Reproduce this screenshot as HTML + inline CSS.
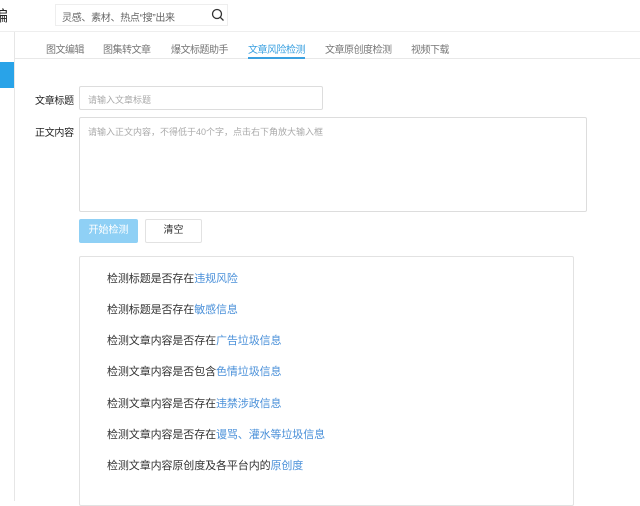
<!DOCTYPE html>
<html><head><meta charset="utf-8"><style>
*{margin:0;padding:0;box-sizing:border-box}
body{width:640px;height:501px;overflow:hidden;background:#fff;font-family:"Liberation Sans","Noto Sans CJK SC",sans-serif;position:relative;color:#333}
.a{position:absolute;white-space:nowrap}
.tab{position:absolute;top:41px;font-size:10px;letter-spacing:-0.5px;color:#777;white-space:nowrap}
.r{position:absolute;left:107px;font-size:11px;letter-spacing:-0.1px;color:#333;white-space:nowrap}
.r span{color:#4a90d9}
</style></head><body>
<div class="a" style="left:-7px;top:5px;font-size:15px;color:#222">编</div>
<div class="a" style="left:55px;top:4px;width:173px;height:22px;border:1px solid #eee;background:#fff"></div>
<div class="a" style="left:62px;top:9px;font-size:10px;letter-spacing:-0.3px;color:#666">灵感、素材、热点“搜”出来</div>
<svg class="a" style="left:211px;top:8px" width="14" height="14" viewBox="0 0 14 14"><circle cx="6" cy="6" r="4.5" fill="none" stroke="#333" stroke-width="1.3"/><line x1="9.3" y1="9.3" x2="12.5" y2="12.5" stroke="#333" stroke-width="1.3"/></svg>
<div class="a" style="left:0;top:31px;width:640px;height:1px;background:#eee"></div>
<div class="a" style="left:14px;top:32px;width:1px;height:469px;background:#e6e6e6"></div>
<div class="a" style="left:0;top:62px;width:14px;height:26px;background:#29a3e8"></div>
<div class="a" style="left:15px;top:58px;width:625px;height:1px;background:#e8e8e8"></div>
<div class="tab" style="left:46px">图文编辑</div>
<div class="tab" style="left:103px">图集转文章</div>
<div class="tab" style="left:171px">爆文标题助手</div>
<div class="tab" style="left:248px;color:#3aa0e0">文章风险检测</div>
<div class="a" style="left:248px;top:57px;width:57px;height:2px;background:#3aa0e0"></div>
<div class="tab" style="left:325px">文章原创度检测</div>
<div class="tab" style="left:411px">视频下载</div>
<div class="a" style="left:35px;top:92px;font-size:10px;letter-spacing:-0.3px;color:#222">文章标题</div>
<div class="a" style="left:79px;top:86px;width:244px;height:24px;border:1px solid #ddd;border-radius:2px"></div>
<div class="a" style="left:88px;top:93px;font-size:9px;color:#aaa">请输入文章标题</div>
<div class="a" style="left:35px;top:124px;font-size:10px;letter-spacing:-0.3px;color:#222">正文内容</div>
<div class="a" style="left:79px;top:117px;width:508px;height:95px;border:1px solid #ddd;border-radius:2px"></div>
<div class="a" style="left:88px;top:125px;font-size:9px;color:#aaa">请输入正文内容，不得低于40个字，点击右下角放大输入框</div>
<div class="a" style="left:79px;top:219px;width:59px;height:24px;background:#8fd0f5;border-radius:2px;color:#fff;font-size:10px;text-align:center;line-height:24px">开始检测</div>
<div class="a" style="left:145px;top:219px;width:57px;height:24px;border:1px solid #e2e2e2;border-radius:2px;color:#333;font-size:10px;text-align:center;line-height:22px">清空</div>
<div class="a" style="left:79px;top:256px;width:495px;height:250px;border:1px solid #e2e2e2;border-radius:2px"></div>
<div class="r" style="top:270px">检测标题是否存在<span>违规风险</span></div>
<div class="r" style="top:301px">检测标题是否存在<span>敏感信息</span></div>
<div class="r" style="top:332px">检测文章内容是否存在<span>广告垃圾信息</span></div>
<div class="r" style="top:363px">检测文章内容是否包含<span>色情垃圾信息</span></div>
<div class="r" style="top:395px">检测文章内容是否存在<span>违禁涉政信息</span></div>
<div class="r" style="top:426px">检测文章内容是否存在<span>谩骂、灌水等垃圾信息</span></div>
<div class="r" style="top:457px">检测文章内容原创度及各平台内的<span>原创度</span></div>
</body></html>
